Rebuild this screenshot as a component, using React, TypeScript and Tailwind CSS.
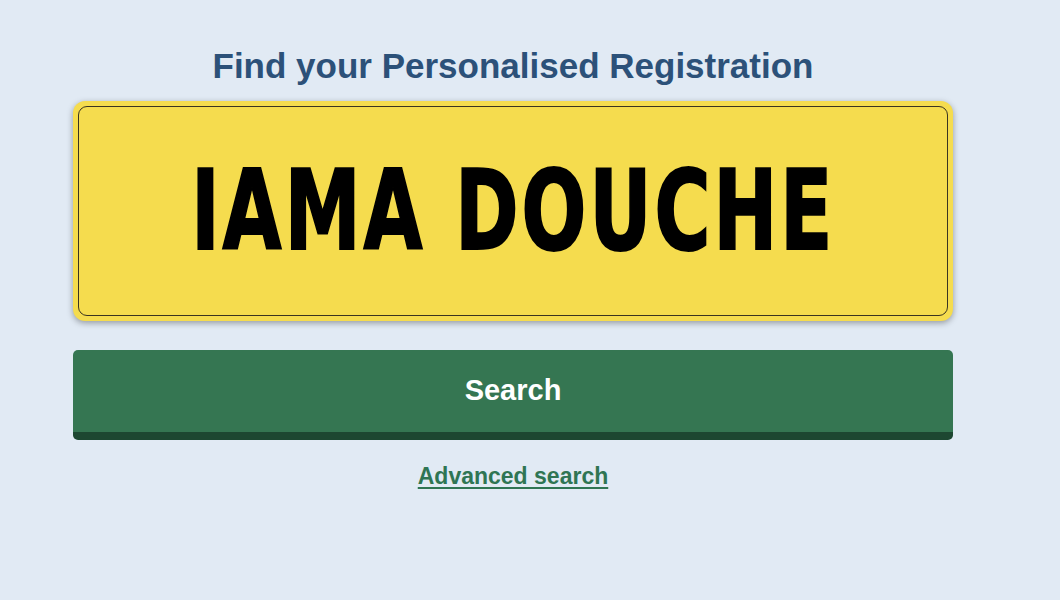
import React from 'react';

/** 번호판 검색 화면 */
const App: React.FC = () => {
  return (
    <div className="min-h-[600px] w-full bg-[#e1eaf4] font-['Liberation_Sans',Arial,sans-serif]">
      <div className="ml-[73px] flex w-[880px] flex-col items-center pt-[44px]">
        <h1 className="text-[35px] font-bold leading-[44px] text-[#2c5179]">
          Find your Personalised Registration
        </h1>

        {/* 노란 번호판 */}
        <div className="mt-[13px] w-full rounded-[12px] bg-[#f5dc4e] p-[5px] shadow-[0_2px_6px_rgba(0,0,0,0.35)]">
          <div className="flex h-[210px] items-center justify-center overflow-hidden rounded-[9px] border-[1.5px] border-[#3a3420]">
            <span className="inline-block origin-center scale-x-[0.77] whitespace-nowrap font-['DejaVu_Sans_Condensed','Liberation_Sans',sans-serif] text-[110px] font-bold leading-none tracking-[4px] text-black [-webkit-text-stroke:2px_black]">
              IAMA DOUCHE
            </span>
          </div>
        </div>

        {/* 검색 버튼 */}
        <button className="mt-[29px] h-[90px] w-full rounded-[5px] border-b-[8px] border-[#1d4731] bg-[#357652] text-[29px] font-bold text-white">
          Search
        </button>

        <a
          href="#"
          className="mt-[19px] text-[23px] font-bold text-[#2f7553] underline decoration-[2px] underline-offset-[3px]"
        >
          Advanced search
        </a>
      </div>
    </div>
  );
};

export default App;
